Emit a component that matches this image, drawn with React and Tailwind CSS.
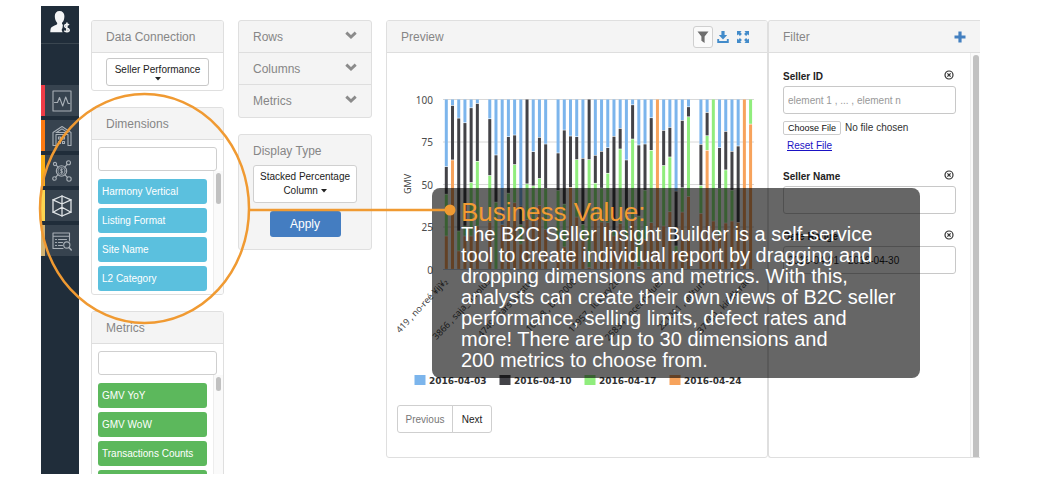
import React from "react";

const STROKE = { fill: "none", stroke: "currentColor", strokeWidth: 1.1, strokeLinejoin: "round", strokeLinecap: "round" };

function SellerIcon() {
  return (
    <svg viewBox="0 0 20 24" className="h-6 w-5" aria-hidden="true">
      <path
        fill="#f4f5f6"
        d="M9.500 1C6.600 1 4.800 3 4.800 6c0 2.600.8 5 2.100 6.400.5.500.4 1.800-.2 2.200C4.800 15.800 1.300 16.300.6 19c-.3 1.200-.3 2.300-.3 3.300h12.400c-1.200-1.500-1.300-3-.2-4.200l.4-3.300c-1-.5-1.300-1.800-.4-2.500C13.700 11 14.400 8.600 14.400 6c0-3-1.900-5-4.900-5z"
      />
      <path d="M18.900 15.200c-.6-1-4.200-1.400-4.300.9 0 2.200 4.600 1.500 4.600 3.900 0 2.200-4 2.200-4.900.7M16.900 12.500v10" fill="none" stroke="#f4f5f6" strokeWidth="1.600" />
    </svg>
  );
}

function PulseIcon() {
  return (
    <svg viewBox="0 0 20 22" className="h-[22px] w-5" {...STROKE} aria-hidden="true">
      <rect x="1" y="1" width="18" height="20" />
      <path d="M2.500 12.500h3l2-5 3.200 8.500 3-9 2.500 6.500h1.500" />
    </svg>
  );
}

function WarehouseIcon() {
  return (
    <svg viewBox="0 0 20 22" className="h-[22px] w-5" {...STROKE} aria-hidden="true">
      <path d="M1 20.500V7.500L10 1.500l9 6v13h-3V9.500H4v11zM4 7.500h12M4.500 7.500l5.500-3.600 5.500 3.600" />
      <path d="M6.500 12h2v2h-2zM10.500 12h2v2h-2zM6.500 16.500h2v2h-2zM10.500 16.500h2v2h-2z" />
    </svg>
  );
}

function NetworkIcon() {
  return (
    <svg viewBox="0 0 20 22" className="h-[22px] w-5" {...STROKE} aria-hidden="true">
      <circle cx="9.500" cy="11" r="5.200" />
      <circle cx="9.500" cy="11" r="3.600" strokeWidth="0.700" />
      <path d="M10.700 9.700c-.4-.7-2.300-.7-2.300.4 0 1.200 2.400.6 2.400 1.900 0 1.100-2 1.100-2.500.3M9.600 8.700v4.700" strokeWidth="0.900" />
      <circle cx="3" cy="4" r="1.600" />
      <circle cx="16.500" cy="2.800" r="2" />
      <circle cx="2.500" cy="18.500" r="1.800" />
      <circle cx="17" cy="19" r="2.200" />
      <path d="M4.200 5.200l1.900 2M15.200 4.400l-2.400 2.700M3.800 17.200l2.200-2.500M15.400 17.400L13 14.800" />
    </svg>
  );
}

function CubeIcon() {
  return (
    <svg viewBox="0 0 20 22" className="h-[22px] w-5 text-[#dfe3e6]" {...STROKE} strokeWidth="1.300" aria-hidden="true">
      <path d="M10 1l9 3.800v12.400L10 21l-9-3.800V4.800z" />
      <path d="M1 4.800L10 9l9-4.200M10 1v20M1 17.200l9-5 9 5" />
    </svg>
  );
}

function ReportIcon() {
  return (
    <svg viewBox="0 0 20 20" className="h-5 w-5" {...STROKE} aria-hidden="true">
      <path d="M11 17.500H1V2h16.500v8M1 5.200h16.500M3.500 8.500h1M6.500 8.500h8M3.500 11.500h1M6.500 11.500h4M3.500 14.500h1M6.500 14.500h4" />
      <circle cx="14.800" cy="14" r="3.100" />
      <path d="M17 16.500l2.300 2.500" strokeWidth="1.500" />
    </svg>
  );
}

function Chevron() {
  return (
    <svg viewBox="0 0 12 8" className="h-2 w-3" aria-hidden="true">
      <path d="M1.300 1.600L6 6l4.700-4.400" fill="none" stroke="#8b8b8b" strokeWidth="2.900" />
    </svg>
  );
}

function Caret() {
  return (
    <svg viewBox="0 0 6 4" className="inline-block h-1 w-1.5" aria-hidden="true">
      <path d="M0 0h6L3 3.600z" fill="#222" />
    </svg>
  );
}

const NAV = [
  { label: "Activity", bar: "bg-[#f03c47]", icon: <PulseIcon /> },
  { label: "Inventory", bar: "bg-[#fd7a12]", icon: <WarehouseIcon /> },
  { label: "Network", bar: "bg-[#fcb017]", icon: <NetworkIcon /> },
  { label: "Builder", bar: "bg-[#fbd551]", icon: <CubeIcon /> },
  { label: "Reports", bar: "bg-[#d2b271]", icon: <ReportIcon /> },
];

function Sidebar() {
  return (
    <nav className="w-[38px] shrink-0 bg-[#202d3a]">
      <div className="flex h-[38px] items-start justify-center border-b border-[#3a4650] pt-1">
        <SellerIcon />
      </div>
      <ul className="mt-[41px] flex flex-col gap-1">
        {NAV.map((n) => (
          <li key={n.label} className="flex h-[31px] bg-[#37434f]">
            <span className={"w-1 " + n.bar} />
            <a href="#" aria-label={n.label} className="flex flex-1 items-center justify-center text-[#a9b0b7]">
              {n.icon}
            </a>
          </li>
        ))}
      </ul>
    </nav>
  );
}

function PanelHeader({ children }) {
  return (
    <div className="flex h-8 items-center border-b border-[#dedede] bg-[#f4f4f4] px-3.5 text-[12px] text-[#868686]">
      {children}
    </div>
  );
}

const PANEL = "overflow-hidden rounded-[3px] border border-[#dfdfdf] bg-white";

function FieldList({ title, items, color, size, thumb }) {
  return (
    <section className={PANEL + " shrink-0 " + size}>
      <PanelHeader>{title}</PanelHeader>
      <div className="px-1.5 pt-[7px]">
        <input aria-label={"Search " + title} className="block h-6 w-full rounded-[3px] border border-[#cfcfcf] bg-white px-2 text-[10px]" />
      </div>
      <div className="flex">
        <ul className="flex flex-1 flex-col gap-1 px-1.5 pt-2">
          {items.map((t) => (
            <li key={t} className={"flex h-[25px] shrink-0 items-center whitespace-nowrap rounded-[3px] px-1 text-[10px] text-white " + color}>
              {t}
            </li>
          ))}
          <li aria-hidden="true" className={"h-[25px] shrink-0 rounded-[3px] " + color} />
        </ul>
        <div className="w-2.5 border-l border-[#ededed] bg-[#fafafa] px-0.5 pt-0.5">
          <div className={"w-[5px] rounded-full bg-[#c1c1c1] " + thumb} />
        </div>
      </div>
    </section>
  );
}

const COLORS = ["#7cb5ec", "#434348", "#90ed7d", "#f7a35c"];
const DATES = ["2016-04-03", "2016-04-10", "2016-04-17", "2016-04-24"];
const FULL = 512;

/* Each entry: depth from the top at which the 2nd, 3rd and 4th series begin. */
const BARS = [
  [203, 286, 412], [19, 183, 183], [57, 397, 457], [71, 382, 412], [26, 251, 412], [13, 187, 382], null,
  [59, 230, 370], [168, 310, 512], [378, 378, 378], [113, 283, 364], [108, 197, 312], [322, 378, 436],
  [0, 255, 362], [158, 261, 367], [115, 239, 320], [135, 269, 392], null, [162, 275, 422], [93, 316, 445],
  [111, 266, 266], [113, 182, 355], [178, 377, 422], [0, 182, 507], [169, 253, 362], [157, 268, 370],
  [146, 223, 372], [112, 397, 412], [88, 150, 375], [183, 352, 422], [17, 120, 360], [138, 352, 504],
  [135, 274, 422], [56, 154, 372], [0, 0, 0], [94, 200, 382], [85, 174, 339], [277, 442, 462], [64, 267, 340],
  [23, 53, 293], null, [136, 260, 344], [40, 110, 154], [0, 0, 367], [146, 269, 412], [97, 213, 373],
  [157, 274, 367], [141, 371, 371], [0, 0, 0], [0, 0, 75],
];

const X_LABELS = [
  [61, "419 , no-reé ¥ij¥₂"], [104, "3866 , saja_surplus"], [147, "4749 , carstartstuf"], [190, "10218 , buy2000"],
  [233, "11957 , luxury2u"], [277, "25834 , oceanblues"], [320, "221011 , adturn"], [363, "37750 , kiddlerac"],
];

function Chart() {
  const top = 46.500;
  const height = 170;
  return (
    <svg viewBox="0 0 380 344" className="block w-full" role="img" aria-label="GMV stacked percentage column chart">
      {[100, 75, 50, 25, 0].map((v, i) => (
        <g key={v}>
          <line x1="56" x2="367" y1={top + i * 42.5} y2={top + i * 42.5} stroke={v ? "#d8d8d8" : "#c0d0e0"} />
          <text x="46" y={top + i * 42.5 + 4} textAnchor="end" fontSize="10" fill="#4c4c4c" className="font-['Noto_Sans',sans-serif]">{v}</text>
        </g>
      ))}
      <text transform="translate(24 131) rotate(-90)" textAnchor="middle" fontSize="9" fill="#444" className="font-['Noto_Sans',sans-serif]">GMV</text>
      {BARS.map((bar, i) => {
        if (!bar) return null;
        const edges = [0, ...bar, FULL];
        return COLORS.map((c, k) => {
          const h = ((edges[k + 1] - edges[k]) * height) / FULL;
          if (h <= 0) return null;
          return (
            <rect key={i + "-" + k} x={57.800 + i * 6.210} y={top + (edges[k] * height) / FULL} width="3" height={Math.max(h - 0.6, 0.4)} fill={c} />
          );
        });
      })}
      {X_LABELS.map(([x, t]) => (
        <text key={x} transform={"translate(" + x + " 229) rotate(-47)"} textAnchor="end" fontSize="9" fill="#444" className="font-['Noto_Sans',sans-serif]">{t}</text>
      ))}
      {DATES.map((d, i) => (
        <g key={d}>
          <rect x={27.500 + i * 85} y="322" width="11" height="10" fill={COLORS[i]} />
          <text x={42 + i * 85} y="331" fontSize="9" fontWeight="700" fill="#333" className="font-['DejaVu_Sans',sans-serif]">{d}</text>
        </g>
      ))}
    </svg>
  );
}

function Preview() {
  return (
    <section className={PANEL + " min-w-0 flex-1"}>
      <PanelHeader>
        <h2 className="flex-1">Preview</h2>
        <button aria-label="Filter chart" className="flex h-[22px] w-5 items-center justify-center rounded-[3px] border border-[#cfcfcf] bg-[#fafafa]">
          <svg viewBox="0 0 12 12" className="h-3 w-3" aria-hidden="true"><path d="M.5.500h11L7.600 5.500V12L4.400 9.800V5.500z" fill="#6f6f6f" /></svg>
        </button>
        <button aria-label="Download" className="ml-1">
          <svg viewBox="0 0 12 12" className="h-3 w-3" aria-hidden="true">
            <path d="M4.400 0h3.200v4h2.600L6 8.600 1.800 4h2.600z" fill="#428bca" />
            <path d="M1.200 8v3h9.600V8" fill="none" stroke="#428bca" strokeWidth="1.900" />
          </svg>
        </button>
        <button aria-label="Expand" className="ml-2">
          <svg viewBox="0 0 12 12" className="h-3 w-3" fill="#428bca" aria-hidden="true">
            <path d="M0 0h4.600L3.300 1.300l1.600 1.600-2 2-1.600-1.600L0 4.600zM12 0v4.600l-1.300-1.300-1.600 1.600-2-2 1.600-1.600L7.400 0zM12 12H7.400l1.300-1.300-1.600-1.600 2-2 1.600 1.600L12 7.400zM0 12V7.400l1.300 1.300 1.600-1.600 2 2-1.600 1.600L4.600 12z" />
          </svg>
        </button>
        <span className="w-1" />
      </PanelHeader>
      <Chart />
      <div className="flex px-2.5 pt-2 pb-6 text-[10px]">
        <button className="h-7 w-14 rounded-l-[3px] border border-[#cfcfcf] text-[#777]">Previous</button>
        <button className="-ml-px h-7 w-10 rounded-r-[3px] border border-[#cfcfcf] text-[#222]">Next</button>
      </div>
    </section>
  );
}

function RemoveButton({ name }) {
  return (
    <button aria-label={"Remove " + name} className="mb-0.5">
      <svg viewBox="0 0 10 10" className="h-2.5 w-2.5" fill="none" stroke="#333" aria-hidden="true">
        <circle cx="5" cy="5" r="4" strokeWidth="1.200" />
        <path d="M3.400 3.400l3.200 3.200M6.600 3.400L3.400 6.600" strokeWidth="1.300" />
      </svg>
    </button>
  );
}

function FilterField({ id, label, children, ...rest }) {
  return (
    <div>
      <div className="flex h-4 items-center justify-between pr-0.5">
        <label htmlFor={id} className="text-[10px] font-bold text-[#222]">{label}</label>
        <RemoveButton name={label} />
      </div>
      <input id={id} className="mt-0.5 block h-7 w-full rounded-[3px] border border-[#c8c8c8] bg-white px-1 text-[10px] text-[#222] placeholder:text-[#999]" {...rest} />
      {children}
    </div>
  );
}

function Filter() {
  return (
    <section className="flex w-[212px] shrink-0 flex-col overflow-hidden rounded-l-[3px] border-y border-l border-[#dfdfdf] bg-white">
      <PanelHeader>
        <h2 className="flex-1">Filter</h2>
        <button aria-label="Add filter">
          <svg viewBox="0 0 12 12" className="h-3 w-3" aria-hidden="true"><path d="M4.400.500h3.200v3.900h3.900v3.200H7.600v3.900H4.400V7.600H.5V4.400h3.900z" fill="#4480c0" /></svg>
        </button>
      </PanelHeader>
      <div className="flex flex-1">
        <div className="flex flex-1 flex-col gap-3.5 px-3.5 pt-[15px]">
          <FilterField id="seller-id" label="Seller ID" placeholder="element 1 , ... , element n">
            <input
              type="file"
              aria-label="Seller ID file"
              className="mt-[7px] block h-3.5 w-full text-[10px] leading-[14px] text-[#333] file:mr-1 file:h-3.5 file:rounded-[2px] file:border file:border-solid file:border-[#ccc] file:bg-white file:px-1 file:text-[9px] file:leading-3 file:text-[#111]"
            />
            <a href="#" className="ml-1 mt-[3px] block w-fit text-[10px] leading-4 text-[#1a12c4] underline">Reset File</a>
          </FilterField>
          <FilterField id="seller-name" label="Seller Name" />
          <FilterField id="date-range" label="Date Range" defaultValue="2016-04-01 - 2016-04-30" />
        </div>
        <div className="w-2.5 border-l border-[#ededed] bg-[#fafafa] px-0.5 pt-0.5">
          <div className="h-full w-1.5 rounded-t-full bg-[#c1c1c1]" />
        </div>
      </div>
    </section>
  );
}

export default function App() {
  return (
    <div className="relative h-screen overflow-hidden bg-white pt-1.5 pb-1 pl-[41px] pr-[67px] font-['Liberation_Sans',Arial,sans-serif]">
      <div className="flex h-full overflow-hidden">
        <Sidebar />
        <main className="flex min-w-0 flex-1 items-start pl-3 pt-3.5">
          <div className="flex w-[133px] shrink-0 flex-col gap-4">
            <section className={PANEL + " h-[71px] shrink-0"}>
              <PanelHeader>Data Connection</PanelHeader>
              <div className="px-3.5 pt-[5px]">
                <button className="flex h-7 w-full flex-col items-center justify-center whitespace-nowrap rounded-[3px] border border-[#c8c8c8] text-[10px] leading-[14px] text-[#222]">
                  Seller Performance
                  <Caret />
                </button>
              </div>
            </section>
            <FieldList
              title="Dimensions"
              items={["Harmony Vertical", "Listing Format", "Site Name", "L2 Category"]}
              color="bg-[#5bc0de]"
              size="h-[188px]"
              thumb="h-[31px]"
            />
            <FieldList
              title="Metrics"
              items={["GMV YoY", "GMV WoW", "Transactions Counts"]}
              color="bg-[#5cb85c]"
              size="h-[188px]"
              thumb="h-3.5"
            />
          </div>
          <div className="ml-3.5 flex w-[134px] shrink-0 flex-col gap-4 text-[#868686]">
            <section className="divide-y divide-[#dedede] rounded-[3px] border border-[#dfdfdf] bg-[#f4f4f4]">
              {["Rows", "Columns", "Metrics"].map((t) => (
                <button key={t} className="flex h-8 w-full items-center justify-between px-3.5 text-[12px]">
                  {t}
                  <span className="mb-1"><Chevron /></span>
                </button>
              ))}
            </section>
            <section className="flex h-[116px] flex-col rounded-[3px] border border-[#dfdfdf] bg-[#f4f4f4] px-3.5 pt-1.5">
              <h2 className="text-[12px] leading-5">Display Type</h2>
              <button className="mt-1 h-[38px] whitespace-nowrap rounded-[3px] border border-[#d0d0d0] bg-white text-[10px] leading-[14px] text-[#222]">
                Stacked Percentage<br />Column <Caret />
              </button>
              <button className="mt-2 h-[26px] w-[71px] self-center rounded-[3px] bg-[#447dc1] text-[12px] text-white">Apply</button>
            </section>
          </div>
          <div className="ml-3.5 flex min-w-0 flex-1">
            <Preview />
            <Filter />
          </div>
        </main>
      </div>

      <aside className="absolute left-[432px] top-[188px] w-[488px] rounded-lg bg-black/60 pt-3 pb-[7px] pl-[29px] text-white">
        <h1 className="text-[26px] leading-6 text-[#f29b34]">Business Value:</h1>
        <p className="whitespace-nowrap text-[20px] leading-[21px]">
          The B2C Seller Insight Builder is a self-service<br />
          tool to create individual report by dragging and<br />
          dropping dimensions and metrics. With this,<br />
          analysts can create their own views of B2C seller<br />
          performance, selling limits, defect rates and<br />
          more! There are up to 30 dimensions and<br />
          200 metrics to choose from.
        </p>
      </aside>
      <svg viewBox="0 0 460 340" className="pointer-events-none absolute left-0 top-0 h-[340px] w-[460px]" aria-hidden="true">
        <g fill="none" stroke="#f09a32" strokeWidth="2.500">
          <ellipse cx="144.500" cy="208.500" rx="104.500" ry="114.500" />
          <path d="M249 210h201" />
        </g>
        <circle cx="450" cy="210" r="5.500" fill="#f09a32" />
      </svg>
    </div>
  );
}
